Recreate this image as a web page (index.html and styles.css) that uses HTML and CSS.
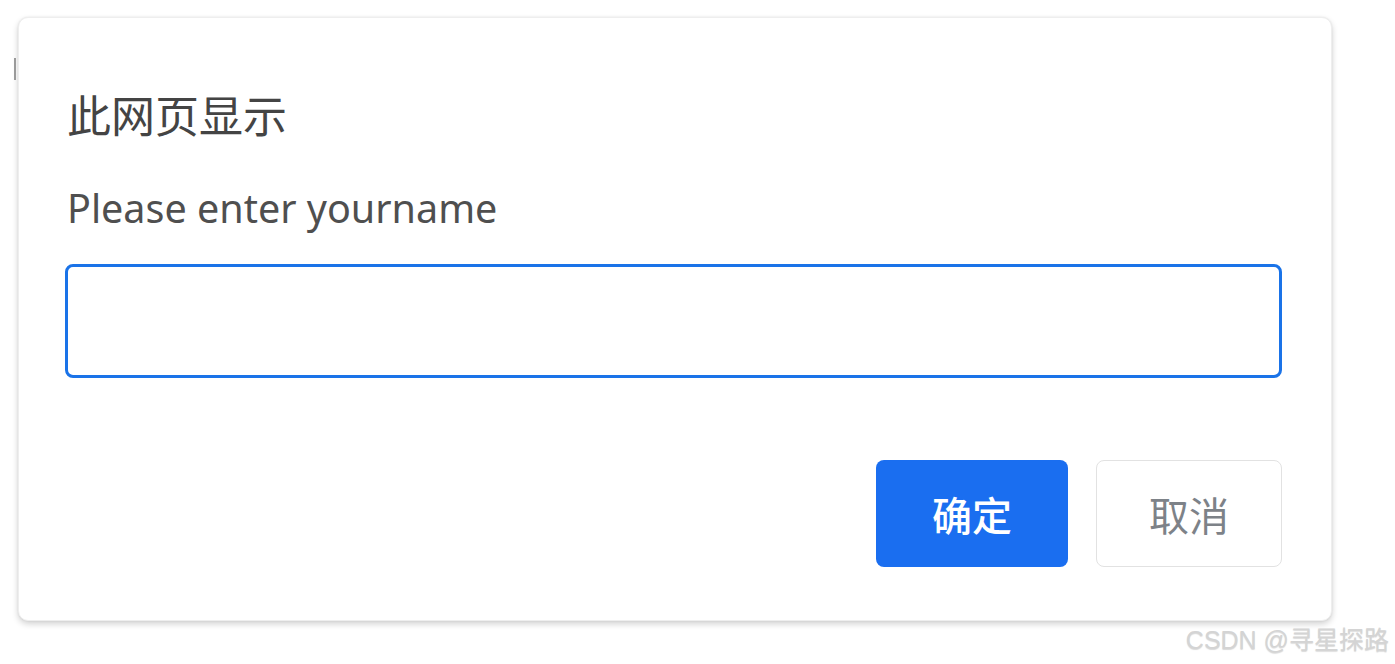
FILE: index.html
```html
<!DOCTYPE html>
<html lang="zh">
<head>
<meta charset="utf-8">
<title>此网页显示</title>
<link rel="stylesheet" href="styles.css">
</head>
<body>
<div class="page">
  <div class="edge-mark"></div>
  <div class="dialog">
    <h1 class="title">此网页显示</h1>
    <p class="message">Please enter yourname</p>
    <div class="field"></div>
    <div class="actions">
      <button class="btn btn-primary">确定</button>
      <button class="btn btn-secondary">取消</button>
    </div>
  </div>
  <div class="watermark">CSDN @寻星探路</div>
</div>
</body>
</html>
```
FILE: styles.css
```css
html, body {
  margin: 0;
  padding: 0;
  background: #ffffff;
}
.page {
  position: relative;
  width: 1395px;
  height: 664px;
  overflow: hidden;
  padding-top: 17px;
  padding-left: 18px;
  box-sizing: border-box;
  font-family: "Noto Sans", "Open Sans", "Noto Sans CJK SC", sans-serif;
}
.edge-mark {
  position: absolute;
  left: 14px;
  top: 58px;
  width: 2px;
  height: 22px;
  background: #9a9a9a;
}
.dialog {
  width: 1314px;
  height: 604px;
  box-sizing: border-box;
  background: #ffffff;
  border-radius: 10px;
  border: 1px solid #eeeeee;
  box-shadow: 0 3px 6px rgba(0,0,0,0.18), 0 0 2px rgba(0,0,0,0.08);
  padding: 70px 49px 0 48px;
  display: flex;
  flex-direction: column;
}
.title {
  margin: 0;
  font-family: "Noto Sans CJK SC", sans-serif;
  font-weight: 400;
  font-size: 44px;
  line-height: 52px;
  color: #444444;
}
.message {
  margin: 42px 0 0 0;
  font-family: "Noto Sans", "Noto Sans CJK SC", sans-serif;
  font-size: 39.5px;
  line-height: 52px;
  color: #4f4f4f;
}
.field {
  margin-top: 30px;
  margin-left: -2px;
  height: 114px;
  box-sizing: border-box;
  border: 3px solid #1a73e8;
  border-radius: 8px;
  background: #ffffff;
}
.actions {
  margin-top: 82px;
  display: flex;
  justify-content: flex-end;
  gap: 28px;
}
.btn {
  height: 107px;
  border-radius: 8px;
  font-family: "Noto Sans CJK SC", sans-serif;
  font-size: 40px;
  padding: 0;
  cursor: pointer;
}
.btn-primary {
  width: 192px;
  background: #1a6ef0;
  border: none;
  color: #ffffff;
  font-weight: 500;
}
.btn-secondary {
  width: 186px;
  background: #ffffff;
  border: 1px solid #e2e2e2;
  color: #7d8288;
}
.watermark {
  position: absolute;
  right: 6px;
  bottom: 8px;
  font-family: "Liberation Sans", "Noto Sans CJK SC", sans-serif;
  font-size: 25px;
  color: #d4d4d4;
  text-shadow: 0 1px 1px rgba(0,0,0,0.15);
}
```
